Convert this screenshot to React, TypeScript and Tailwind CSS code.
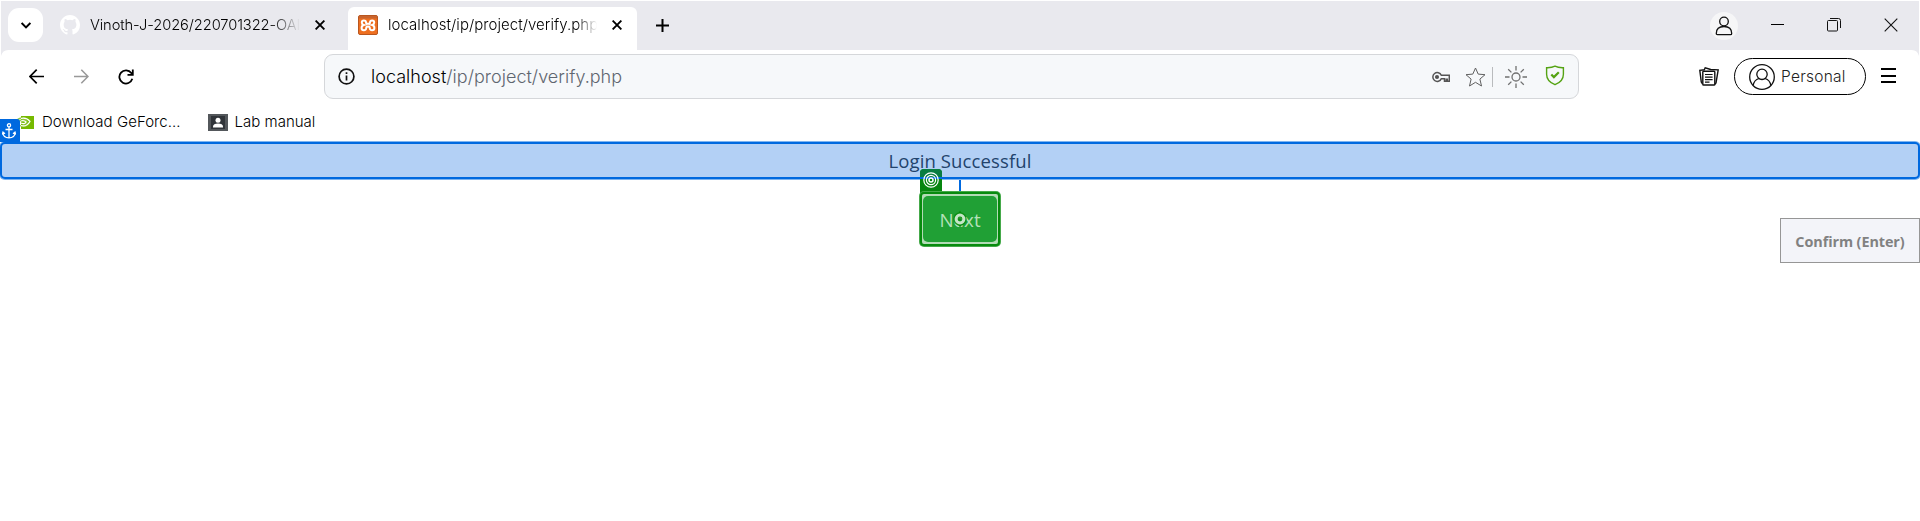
import React from 'react';

const ui = "font-['Inter','Liberation_Sans',sans-serif] font-light whitespace-nowrap";
const page = "font-['Open_Sans','Noto_Sans',sans-serif] whitespace-nowrap";

function GithubMark() {
  return (
    <svg viewBox="0 0 16 16" className="size-5 shrink-0 fill-white">
      <path d="M8 0C3.58 0 0 3.58 0 8c0 3.54 2.29 6.53 5.47 7.59.4.07.55-.17.55-.38 0-.19-.01-.82-.01-1.49-2.01.37-2.53-.49-2.69-.94-.09-.23-.48-.94-.82-1.13-.28-.15-.68-.52-.01-.53.63-.01 1.08.58 1.23.82.72 1.21 1.87.87 2.33.66.07-.52.28-.87.51-1.07-1.78-.2-3.64-.89-3.64-3.95 0-.87.31-1.59.82-2.15-.08-.2-.36-1.02.08-2.12 0 0 .67-.21 2.2.82a7.6 7.6 0 0 1 4 0c1.53-1.04 2.2-.82 2.2-.82.44 1.1.16 1.92.08 2.12.51.56.82 1.27.82 2.15 0 3.07-1.87 3.75-3.65 3.95.29.25.54.73.54 1.48 0 1.07-.01 1.93-.01 2.2 0 .21.15.46.55.38A8 8 0 0 0 16 8c0-4.42-3.58-8-8-8z" />
    </svg>
  );
}

function XamppMark() {
  return (
    <svg viewBox="0 0 20 20" className="size-5 shrink-0">
      <rect x=".5" y=".5" width="19" height="19" rx="1.5" fill="#ee6f20" stroke="#b9561f" />
      <path d="M1 1h18v2.500H1z" fill="#c9642d" />
      <path d="M8 7.200C8 4.800 3.800 4.800 3.800 7.400c0 1.500 1 2.300 2 2.600-1.200.3-2.200 1.300-2.200 3 0 3 4.600 3 4.600.2 0-1.200.8-1.700 1.800-1.700s1.800.5 1.800 1.700c0 2.800 4.600 2.800 4.600-.2 0-1.700-1-2.700-2.200-3 1-.3 2-1.100 2-2.600 0-2.600-4.200-2.600-4.200-.2 0 1-.8 1.600-2 1.600S8 8.200 8 7.200z" fill="none" stroke="#fff" strokeWidth="2" />
    </svg>
  );
}

function Cross() {
  return (
    <svg viewBox="0 0 10 10" className="size-[10px] shrink-0" fill="none" stroke="#000" strokeWidth="1.900">
      <path d="M.6.6l8.800 8.800M9.400.6L.6 9.400" />
    </svg>
  );
}

function TabStrip() {
  return (
    <div className="mx-px mt-px flex h-[49px] bg-[#e9e9ee]">
      <div className="ml-[7px] mt-[7px] flex h-[34px] w-[35px] items-center justify-center rounded-[11px] bg-white">
        <svg viewBox="0 0 10 7" className="h-[7px] w-[10px]" fill="none" stroke="#000" strokeWidth="2">
          <path d="M.6 1L5 5.400 9.400 1" />
        </svg>
      </div>
      <div className="flex h-[48px] w-[305px] items-center pl-[17px]">
        <GithubMark />
        <div className={`${ui} ml-[10px] w-[210px] overflow-hidden text-[14.700px] tracking-[-0.100px] text-black [mask-image:linear-gradient(to_right,black_86%,transparent)]`}>
          Vinoth-J-2026/220701322-OAI
        </div>
        <div className="ml-[15px]"><Cross /></div>
      </div>
      <div className="mt-[6px] flex h-[43px] w-[289px] items-center rounded-t-[6px] bg-white pb-[7px] pl-[10px]">
        <XamppMark />
        <div className={`${ui} ml-[10px] w-[209px] overflow-hidden text-[15px] tracking-[0.050px] text-black [mask-image:linear-gradient(to_right,black_90%,transparent)]`}>
          localhost/ip/project/verify.php
        </div>
        <div className="ml-[15px]"><Cross /></div>
      </div>
      <svg viewBox="0 0 13 13" className="ml-[19px] mt-[18px] size-[13px]" stroke="#000" strokeWidth="2">
        <path d="M6.500 0v13M0 6.500h13" />
      </svg>
      <div className="ml-auto mt-[11px] flex size-7 items-center justify-center rounded-full bg-[#f6f6f7]">
        <svg viewBox="0 0 18 20" className="h-5 w-[18px]" fill="none" stroke="#111" strokeWidth="1.300">
          <circle cx="9" cy="5.500" r="4.300" />
          <path d="M1.300 17.500c0-4.500 2.500-7 7.700-7s7.700 2.500 7.700 7c0 .8-.4 1.200-1.200 1.200h-13c-.8 0-1.200-.4-1.200-1.200z" />
        </svg>
      </div>
      <div className="ml-[33px] mt-[23px] h-px w-[13px] bg-black" />
      <svg viewBox="0 0 14 14" className="ml-[43px] mt-[17px] size-[14px]" fill="none" stroke="#111">
        <rect x=".5" y="2.500" width="10" height="10.500" rx="1" />
        <path d="M3 .5h8.500a2 2 0 0 1 2 2V10" />
      </svg>
      <svg viewBox="0 0 14 14" className="ml-[43px] mr-[21px] mt-[17px] size-[14px]" stroke="#111" strokeWidth="1.100">
        <path d="M.7.700l12.600 12.600M13.300.7L.7 13.300" />
      </svg>
    </div>
  );
}

function AddressBar() {
  return (
    <div className="ml-[190px] flex h-[45px] w-[1255px] items-center rounded-[9px] border border-[#d5d7da] bg-[#f6f8fa] pl-[13px]">
      <svg viewBox="0 0 17 17" className="size-[17px]" fill="none" stroke="#111" strokeWidth="1.700">
        <circle cx="8.500" cy="8.500" r="7.400" />
        <path d="M8.500 7.400v5M8.500 4.300v1.700" />
      </svg>
      <div className={`${ui} ml-[16px] text-[18px] leading-6 tracking-[0.020px] text-[#5f6670]`}>
        <span className="text-black">localhost</span>/ip/project/verify.php
      </div>
      <svg viewBox="0 0 18 12" className="ml-auto h-[12px] w-[18px]" fill="none" stroke="#555" strokeWidth="1.500">
        <path d="M9.300 4.300A4.400 4.400 0 1 0 9.300 7.700h3.200v2.600h1.800V8.200h1v2.100h2V4.300z" />
        <circle cx="5" cy="6" r="1.300" fill="#444" />
      </svg>
      <svg viewBox="0 0 21 20" className="ml-[15px] h-5 w-[21px]" fill="none" stroke="#606060" strokeWidth="1" strokeLinejoin="round">
        <path d="M10.500 1l2.700 6.100 6.800.6-5.100 4.400 1.600 6.900-6-3.700-6 3.700 1.600-6.900L1 7.700l6.800-.6z" />
      </svg>
      <div className="ml-[6px] h-5 w-px bg-[#b9bbbd]" />
      <svg viewBox="0 0 22 22" className="ml-[12px] size-[22px]" fill="none" stroke="#707070" strokeWidth="1.300">
        <circle cx="11" cy="11" r="4" />
        <path d="M11 0v4.500M11 17.500V22M0 11h4.500M17.500 11H22M3.200 3.200l3.200 3.200M15.600 15.600l3.200 3.200M3.200 18.800l3.200-3.200M15.600 6.400l3.200-3.200" />
      </svg>
      <svg viewBox="0 0 20 21" className="mb-[3px] ml-[18px] mr-[13px] h-[21px] w-5" fill="none" stroke="#55a313">
        <path d="M10 1.200c2.500 1.300 5.500 1.600 8.400 1.500v6.500c0 5-3.500 8.500-8.400 10.500-4.900-2-8.400-5.500-8.400-10.500V2.700C4.500 2.800 7.500 2.500 10 1.200z" strokeWidth="1.400" />
        <path d="M6.300 9.400l2.600 2.700 4.900-4.900" strokeWidth="2.200" />
      </svg>
    </div>
  );
}

function Toolbar() {
  return (
    <div className="relative flex h-[53px] shrink-0 items-center bg-white">
      <svg viewBox="0 0 8 8" className="absolute left-px top-0 size-2 fill-[#e9e9ee]"><path d="M0 0h8a8 8 0 0 0-8 6z" /></svg>
      <svg viewBox="0 0 8 8" className="absolute right-px top-0 size-2 fill-[#e9e9ee]"><path d="M0 0h8v6a8 8 0 0 0-8-6z" /></svg>
      <svg viewBox="0 0 15 15" className="ml-[29px] size-[15px]" fill="none" stroke="#000" strokeWidth="1.700">
        <path d="M15 7.500H1.200M7.700.7L1 7.500l6.700 6.800" />
      </svg>
      <svg viewBox="0 0 15 15" className="ml-[30px] size-[15px]" fill="none" stroke="#999" strokeWidth="1.600">
        <path d="M0 7.500h13.800M7.300.7L14 7.500l-6.700 6.800" />
      </svg>
      <svg viewBox="0 0 16 16" className="ml-[29px] size-[16px]" fill="none" stroke="#000" strokeWidth="1.800">
        <path d="M14.300 9.800A6.600 6.600 0 1 1 13.300 4l1 1.500M14.800.5v5.300H9.500" />
      </svg>
      <AddressBar />
      <svg viewBox="0 0 20 19" className="ml-[120px] h-[19px] w-5" fill="none" stroke="#111" strokeWidth="1.400">
        <path d="M3.500 17L2.300 15 .8 3.300l5-.6M5 3.500L6.200.8l5.500 1.700M11 2.500l8.200.4-2.200 13-1.200 1.500" />
        <rect x="3.800" y="4.300" width="12" height="13.700" rx=".8" fill="#fff" />
        <path d="M6 7.500h7.600M6 10.200h7.600M6 12.700h7.600M6 15.200h4.500" strokeWidth="1.200" />
      </svg>
      <div className="ml-[15px] flex h-[37px] w-[132px] items-center rounded-full border-[1.500px] border-black pl-[14px]">
        <svg viewBox="0 0 26 26" className="size-[26px]" fill="none" stroke="#111" strokeWidth="1.300">
          <circle cx="13" cy="13" r="12.300" />
          <circle cx="13" cy="10.300" r="5.200" />
          <path d="M4.200 21.500c.5-4 3-6.200 5.800-7M21.800 21.500c-.5-4-3-6.200-5.800-7" />
        </svg>
        <span className={`${ui} ml-[6px] pt-px text-[15.500px] tracking-[0.250px] text-[#222]`}>Personal</span>
      </div>
      <div className="ml-[15px] mb-[2px] flex h-[15px] w-[15px] flex-col justify-between">
        <div className="h-[2px] bg-black" /><div className="h-[2px] bg-black" /><div className="h-[2px] bg-black" />
      </div>
    </div>
  );
}

function Bookmarks() {
  return (
    <div className="flex h-[38px] items-center bg-white pl-[14px]">
      <svg viewBox="0 0 20 13" className="h-[13px] w-5">
        <path d="M7 0h13v13H7z" fill="#76b900" />
        <path d="M1 6.500C4 1.500 11 0 16 5c-3 7-10 7-12 1.500 3-4 8-3.500 9-.5-2 3-4 3-5 .5" fill="none" stroke="#91c83f" strokeWidth="1.300" />
        <path d="M7 2.500c4-1 7 .5 9 3-3 5-6 5-9 4M7 5c3-1 4 0 5 1-1 2-3 2-5 1" fill="none" stroke="#fff" strokeWidth="1.200" />
      </svg>
      <span className={`${ui} ml-[8px] text-[15px] tracking-[0.050px] text-black`}>Download GeForc...</span>
      <svg viewBox="0 0 20 17" className="ml-[27px] h-[17px] w-5">
        <path d="M0 0h20v17H0z" fill="#53575b" /><path d="M3 2h14v13H3z" fill="#303439" />
        <circle cx="10" cy="6.300" r="2.500" fill="#fff" /><path d="M5 13.500v-1c0-1.800 2-3 5-3s5 1.200 5 3v1z" fill="#fff" />
      </svg>
      <span className={`${ui} ml-[7px] text-[15px] text-black`}>Lab manual</span>
    </div>
  );
}

export default function App() {
  return (
    <div className="flex h-[521px] w-[1920px] flex-col overflow-hidden bg-white">
      <TabStrip />
      <Toolbar />
      <Bookmarks />
      <div className="relative my-px flex h-[37px] w-full shrink-0 items-center justify-center rounded-[5px] border-2 border-[#0069df] bg-[#b3d0f5] shadow-[0_0_0_1px_#7fb4ef]">
        <span className={`${page} pt-px text-[18.500px] leading-6 tracking-[0.120px] text-[#22436c]`}>Login Successful</span>
        <div className="absolute -left-[2px] -top-[25px] flex h-[23px] w-[20px] items-center justify-center rounded-tr-[3px] bg-[#0069df]">
          <svg viewBox="0 0 14 16" className="mr-[2px] h-4 w-[14px]" fill="none" stroke="#fff" strokeWidth="1.300">
            <circle cx="7" cy="2.300" r="1.600" />
            <path d="M7 4v11M3.500 6.500h7M.8 9.500c.3 3.500 2.700 5.300 6.200 5.300s5.900-1.800 6.200-5.300M.3 11.500l.7-2.300 2 1.500M13.700 11.500l-.7-2.300-2 1.500" />
          </svg>
        </div>
      </div>
      <div className="flex items-start">
        <div className="relative ml-[920px] flex w-[80px] flex-col items-center">
          <div className="h-[12px] w-[2px] bg-[#0069df]" />
          <div className="absolute left-0 top-[-11px] flex h-[24px] w-[22px] justify-center rounded-t-[4px] bg-[#07860f] pt-[3px]">
            <div className="absolute inset-x-0 top-0 h-[8px] rounded-t-[4px] bg-[#097d42]" />
            <div className="absolute inset-x-0 top-[8px] h-[2px] bg-[#0069df]" />
            <svg viewBox="0 0 16 16" className="relative size-4" fill="none" stroke="#fff" strokeWidth="1.200">
              <circle cx="8" cy="8" r="7.200" /><circle cx="8" cy="8" r="4.600" /><circle cx="8" cy="8" r="2" strokeWidth="1.500" />
            </svg>
          </div>
          <div className="relative flex h-[54px] w-full rounded-[4px] border-2 border-[#078b0e] bg-[#b2dbb5] px-px pb-[2px] pt-[2px] shadow-[0_0_0_1px_#45a94a]">
            <div className="flex flex-1 items-center justify-center rounded-[5px] bg-[#20a035] pt-[3px]">
              <span className={`${page} text-[18.800px] text-[#b5e0ba]`}>Next</span>
            </div>
            <svg viewBox="0 0 16 18" className="absolute left-[30px] top-[16px] h-[18px] w-4">
              <path d="M6.500 3L8 .5 9.500 3M6.500 15L8 17.500 9.500 15" fill="#078b0e" />
              <circle cx="8" cy="9" r="6.700" fill="#078b0e" fillOpacity=".8" />
              <circle cx="8" cy="9" r="3.900" fill="none" stroke="#c4e5c7" strokeWidth="3" />
            </svg>
          </div>
        </div>
        <div className="ml-auto mt-[38px] flex h-[45px] w-[140px] items-center justify-center border border-[#969696] bg-[#f3f4f9] pt-[2px]">
          <span className={`${page} text-[14.400px] font-bold tracking-[-0.080px] text-[#818181]`}>Confirm (Enter)</span>
        </div>
      </div>
    </div>
  );
}
